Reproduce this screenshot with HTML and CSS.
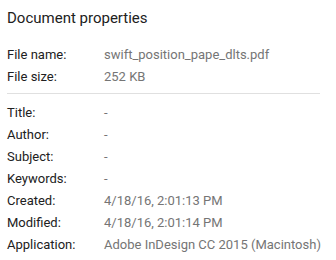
FILE: index.html
```html
<!DOCTYPE html>
<html lang="en">
<head>
    <meta charset="UTF-8">
    <title>Document properties</title>
    <link rel="stylesheet" href="styles.css">
</head>
<body>
    <div class="dialog">
        <h2 class="dialog-title">Document properties</h2>
        <div class="props">
            <div class="label">File name:</div><div class="value">swift_position_pape_dlts.pdf</div>
            <div class="label">File size:</div><div class="value">252 KB</div>
        </div>
        <hr class="divider">
        <div class="props">
            <div class="label">Title:</div><div class="value">-</div>
            <div class="label">Author:</div><div class="value">-</div>
            <div class="label">Subject:</div><div class="value">-</div>
            <div class="label">Keywords:</div><div class="value">-</div>
            <div class="label">Created:</div><div class="value">4/18/16, 2:01:13 PM</div>
            <div class="label">Modified:</div><div class="value">4/18/16, 2:01:14 PM</div>
            <div class="label">Application:</div><div class="value">Adobe InDesign CC 2015 (Macintosh)</div>
        </div>
    </div>
</body>
</html>
```

FILE: styles.css
```css
body {
    margin: 0;
    background-color: #fff;
    font-family: Roboto, "Noto Sans", sans-serif;
    color: #212121;
}
.dialog {
    padding: 6px 16px 0 7px;
}
.dialog-title {
    margin: 0;
    font-size: 15px;
    font-weight: 400;
    line-height: 24px;
    color: #212121;
}
.props {
    display: grid;
    grid-template-columns: 97px 1fr;
    font-size: 13px;
    line-height: 22px;
}
.props:first-of-type {
    margin-top: 13.5px;
}
.label {
    color: #212121;
}
.value {
    color: #757575;
    white-space: nowrap;
}
.divider {
    border: none;
    border-top: 1px solid #e0e0e0;
    margin: 5px 0 8.5px 0;
}
```
